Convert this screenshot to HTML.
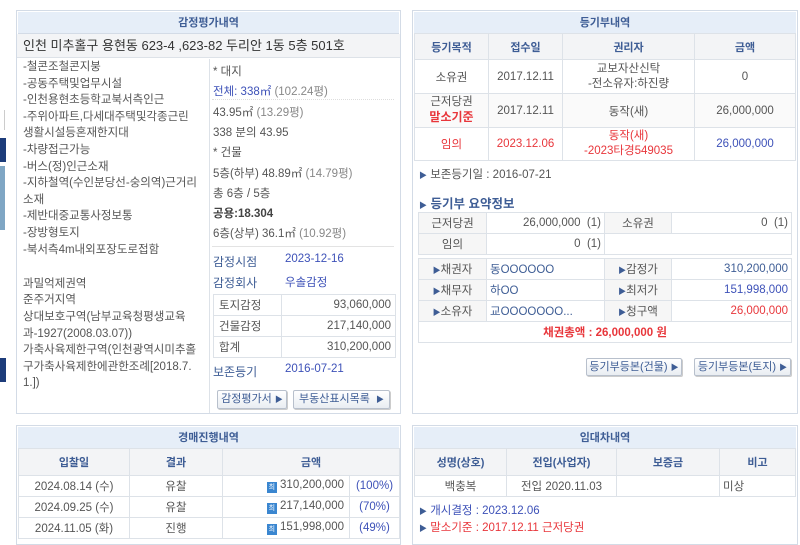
<!DOCTYPE html>
<html><head><meta charset="utf-8"><style>
*{margin:0;padding:0;box-sizing:border-box}
body{width:800px;height:538px;overflow:hidden;background:#fff;font-family:"Liberation Sans","Noto Sans CJK KR","NanumGothic",sans-serif;font-size:11.5px;color:#555;position:relative}
.p{position:absolute;border:1px solid #d3dbe6;background:#fff}
.hd{position:absolute;left:1px;right:1px;background:#e6eef8;color:#3e5d95;font-weight:bold;text-align:center;font-size:11px;border-bottom:1px solid #d3dbe6}
table{border-collapse:collapse;position:absolute}
td,th{border:1px solid #dde2e8;text-align:center;font-weight:normal}
th{background:#f3f4f6;color:#3e5d95;font-weight:bold;font-size:11px}
.a{position:absolute;white-space:nowrap}
.bl{color:#3d51b8}.rd{color:#e8363b}.nv{color:#3e5d95}
.btn{position:absolute;border:1px solid #b8c0cc;border-radius:2px;background:linear-gradient(#fff,#e9edf2);color:#3e5d95;font-size:11px;text-align:center;line-height:17px;box-shadow:1px 1px 0 #ccc}
.tri{font-size:8px;color:#3e5d95}
.lc div{height:16.6px;line-height:16.6px}
.ic{display:inline-block;width:10px;height:11px;background:#3a86d0;color:#fff;font-size:7px;line-height:11px;vertical-align:-1px;text-align:center}
</style></head><body>
<div style="position:absolute;left:0;top:110px;width:5px;height:20px;background:#fff;border-right:1px solid #ccc"></div>
<div style="position:absolute;left:0;top:138px;width:6px;height:24px;background:#1d3c7a"></div>
<div style="position:absolute;left:0;top:166px;width:5px;height:64px;background:#7fa6c4"></div>
<div style="position:absolute;left:0;top:358px;width:6px;height:24px;background:#1d3c7a"></div>

<div class="p" style="left:16px;top:10px;width:385px;height:404px">
 <div class="hd" style="top:1px;height:22px;line-height:22px">감정평가내역</div>
 <div class="a" style="left:0;right:0;top:23px;height:24px;line-height:24px;background:#f3f4f6;border-bottom:1px solid #dde2e8;padding-left:6px;font-size:13px;color:#333">인천 미추홀구 용현동 623-4 ,623-82 두리안 1동 5층 501호</div>
 <div style="position:absolute;left:192px;top:48px;bottom:0;border-left:1px solid #dde2e8"></div>
 <div class="a lc" style="left:6px;top:48px">
  <div>-철콘조철콘지붕</div><div>-공동주택및업무시설</div><div>-인천용현초등학교북서측인근</div><div>-주위아파트,다세대주택및각종근린</div><div>생활시설등혼재한지대</div><div>-차량접근가능</div><div>-버스(정)인근소재</div><div>-지하철역(수인분당선-숭의역)근거리</div><div>소재</div><div>-제반대중교통사정보통</div><div>-장방형토지</div><div>-북서측4m내외포장도로접함</div><div></div><div style="margin-top:1px">과밀억제권역</div><div>준주거지역</div><div>상대보호구역(남부교육청평생교육</div><div>과-1927(2008.03.07))</div><div>가축사육제한구역(인천광역시미추홀</div><div>구가축사육제한에관한조례[2018.7.</div><div>1.])</div>
 </div>
 <div class="a" style="left:196px;top:52px">* 대지</div>
 <div class="a" style="left:196px;top:72px"><span class="bl">전체: 338㎡</span> <span style="color:#888">(102.24평)</span></div>
 <div style="position:absolute;left:195px;right:6px;top:88px;border-top:1px dotted #ddd"></div>
 <div class="a" style="left:196px;top:93px">43.95㎡ <span style="color:#888">(13.29평)</span></div>
 <div class="a" style="left:196px;top:113px">338 분의 43.95</div>
 <div class="a" style="left:196px;top:133px">* 건물</div>
 <div class="a" style="left:196px;top:154px">5층(하부) 48.89㎡ <span style="color:#888">(14.79평)</span></div>
 <div class="a" style="left:196px;top:174px">총 6층 / 5층</div>
 <div class="a" style="left:196px;top:194px;font-weight:bold;color:#444">공용:18.304</div>
 <div class="a" style="left:196px;top:214px">6층(상부) 36.1㎡ <span style="color:#888">(10.92평)</span></div>
 <div style="position:absolute;left:195px;right:6px;top:235px;border-top:1px solid #e3e3e3"></div>
 <div class="a nv" style="left:196px;top:242px;font-size:12px">감정시점</div><div class="a bl" style="left:268px;top:242px">2023-12-16</div>
 <div class="a nv" style="left:196px;top:263px;font-size:12px">감정회사</div><div class="a bl" style="left:268px;top:263px">우솔감정</div>
 <table style="left:196px;top:283px;width:183px;font-size:11.5px">
  <tr style="height:21px"><td style="text-align:left;padding-left:5px;width:68px">토지감정</td><td style="text-align:right;padding-right:4px">93,060,000</td></tr>
  <tr style="height:21px"><td style="text-align:left;padding-left:5px">건물감정</td><td style="text-align:right;padding-right:4px">217,140,000</td></tr>
  <tr style="height:21px"><td style="text-align:left;padding-left:5px">합계</td><td style="text-align:right;padding-right:4px">310,200,000</td></tr>
 </table>
 <div class="a nv" style="left:196px;top:352px;font-size:12px">보존등기</div><div class="a bl" style="left:268px;top:352px">2016-07-21</div>
 <div class="btn" style="left:200px;top:379px;width:70px;height:19px">감정평가서 <span class="tri">▶</span></div>
 <div class="btn" style="left:276px;top:379px;width:97px;height:19px">부동산표시목록 &nbsp;<span class="tri">▶</span></div>
</div>

<div class="p" style="left:412px;top:10px;width:386px;height:404px">
 <div class="hd" style="top:1px;height:22px;line-height:22px">등기부내역</div>
 <table style="left:1px;top:22px;width:382px;font-size:11.5px">
  <tr style="height:26px"><th style="width:74px">등기목적</th><th style="width:74px">접수일</th><th style="width:132px">권리자</th><th>금액</th></tr>
  <tr style="height:34px"><td>소유권</td><td>2017.12.11</td><td style="line-height:15px">교보자산신탁<br>-전소유자:하진량</td><td>0</td></tr>
  <tr style="height:34px;background:#fafafa"><td style="line-height:15px">근저당권<br><b class="rd" style="font-size:12px">말소기준</b></td><td>2017.12.11</td><td>동작(새)</td><td>26,000,000</td></tr>
  <tr style="height:33px"><td class="rd">임의</td><td class="rd">2023.12.06</td><td class="rd" style="line-height:15px">동작(새)<br>-2023타경549035</td><td class="bl">26,000,000</td></tr>
 </table>
 <div class="a" style="left:6px;top:155px"><span class="tri">▶</span> 보존등기일 : 2016-07-21</div>
 <div class="a nv" style="left:6px;top:182px;font-weight:bold;font-size:12.5px"><span class="tri">▶</span> 등기부 요약정보</div>
 <table style="left:5px;top:201px;width:374px;font-size:11.5px">
  <tr style="height:21px"><td style="width:68px;background:#f6f6f6">근저당권</td><td style="width:118px;text-align:right;padding-right:3px">26,000,000 &nbsp;(1)</td><td style="width:67px;background:#f6f6f6">소유권</td><td style="text-align:right;padding-right:3px">0 &nbsp;(1)</td></tr>
  <tr style="height:21px"><td style="background:#f6f6f6">임의</td><td style="text-align:right;padding-right:3px">0 &nbsp;(1)</td><td colspan="2"></td></tr>
 </table>
 <table style="left:5px;top:247px;width:374px;font-size:11.5px">
  <tr style="height:21px"><td style="width:68px;background:#f6f6f6"><span class="tri">▶</span>채권자</td><td style="width:118px;text-align:left;padding-left:3px" class="nv">동OOOOOO</td><td style="width:67px;background:#f6f6f6"><span class="tri">▶</span>감정가</td><td style="text-align:right;padding-right:3px" class="nv">310,200,000</td></tr>
  <tr style="height:21px"><td style="background:#f6f6f6"><span class="tri">▶</span>채무자</td><td style="text-align:left;padding-left:3px" class="nv">하OO</td><td style="background:#f6f6f6"><span class="tri">▶</span>최저가</td><td style="text-align:right;padding-right:3px" class="bl">151,998,000</td></tr>
  <tr style="height:21px"><td style="background:#f6f6f6"><span class="tri">▶</span>소유자</td><td style="text-align:left;padding-left:3px" class="nv">교OOOOOOO...</td><td style="background:#f6f6f6"><span class="tri">▶</span>청구액</td><td style="text-align:right;padding-right:3px" class="rd">26,000,000</td></tr>
  <tr style="height:21px"><td colspan="4" class="rd" style="font-weight:bold">채권총액 : 26,000,000 원</td></tr>
 </table>
 <div class="btn" style="left:173px;top:347px;width:96px;height:18px">등기부등본(건물) <span class="tri">▶</span></div>
 <div class="btn" style="left:281px;top:347px;width:97px;height:18px">등기부등본(토지) <span class="tri">▶</span></div>
</div>

<div class="p" style="left:16px;top:425px;width:385px;height:120px">
 <div class="hd" style="top:1px;height:22px;line-height:22px">경매진행내역</div>
 <table style="left:1px;top:22px;width:382px;font-size:11.5px">
  <tr style="height:27px"><th style="width:111px">입찰일</th><th style="width:93px">결과</th><th colspan="2">금액</th></tr>
  <tr style="height:21px"><td>2024.08.14 (수)</td><td>유찰</td><td style="text-align:right;padding-right:5px"><span class="ic">최</span> 310,200,000</td><td class="bl" style="width:50px">(100%)</td></tr>
  <tr style="height:21px"><td>2024.09.25 (수)</td><td>유찰</td><td style="text-align:right;padding-right:5px"><span class="ic">최</span> 217,140,000</td><td class="bl">(70%)</td></tr>
  <tr style="height:21px"><td>2024.11.05 (화)</td><td>진행</td><td style="text-align:right;padding-right:5px"><span class="ic">최</span> 151,998,000</td><td class="bl">(49%)</td></tr>
 </table>
</div>

<div class="p" style="left:412px;top:425px;width:386px;height:120px">
 <div class="hd" style="top:1px;height:22px;line-height:22px">임대차내역</div>
 <table style="left:1px;top:22px;width:382px;font-size:11.5px">
  <tr style="height:27px"><th style="width:92px">성명(상호)</th><th style="width:110px">전입(사업자)</th><th style="width:103px">보증금</th><th>비고</th></tr>
  <tr style="height:21px"><td>백충복</td><td>전입 2020.11.03</td><td></td><td style="text-align:left;padding-left:3px">미상</td></tr>
 </table>
 <div class="a bl" style="left:6px;top:76px"><span class="tri" style="color:#3e5d95">▶</span> 개시결정 : 2023.12.06</div>
 <div class="a rd" style="left:6px;top:93px"><span class="tri" style="color:#3e5d95">▶</span> 말소기준 : 2017.12.11 근저당권</div>
</div>
</body></html>
